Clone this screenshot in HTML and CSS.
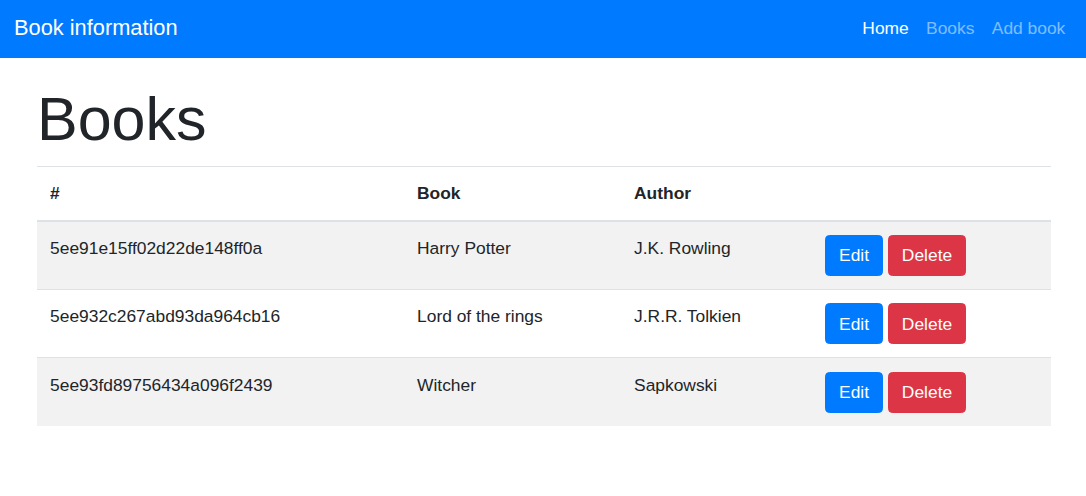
FILE: index.html
```html
<!DOCTYPE html>
<html lang="en">
<head>
<meta charset="utf-8">
<title>Book information</title>
<link rel="stylesheet" href="styles.css">
</head>
<body>
<nav class="navbar">
  <a class="brand" href="#">Book information</a>
  <ul class="nav">
    <li><a class="nav-link active" href="#">Home</a></li>
    <li><a class="nav-link" href="#">Books</a></li>
    <li><a class="nav-link" href="#">Add book</a></li>
  </ul>
</nav>
<main class="container">
  <h1 class="title">Books</h1>
  <table class="table">
    <colgroup>
      <col class="c-id"><col class="c-book"><col class="c-author"><col class="c-actions">
    </colgroup>
    <thead>
      <tr><th>#</th><th>Book</th><th>Author</th><th></th></tr>
    </thead>
    <tbody>
      <tr class="odd">
        <td>5ee91e15ff02d22de148ff0a</td><td>Harry Potter</td><td>J.K. Rowling</td>
        <td><button class="btn btn-primary">Edit</button> <button class="btn btn-danger">Delete</button></td>
      </tr>
      <tr>
        <td>5ee932c267abd93da964cb16</td><td>Lord of the rings</td><td>J.R.R. Tolkien</td>
        <td><button class="btn btn-primary">Edit</button> <button class="btn btn-danger">Delete</button></td>
      </tr>
      <tr class="odd">
        <td>5ee93fd89756434a096f2439</td><td>Witcher</td><td>Sapkowski</td>
        <td><button class="btn btn-primary">Edit</button> <button class="btn btn-danger">Delete</button></td>
      </tr>
    </tbody>
  </table>
</main>
</body>
</html>
```

FILE: styles.css
```css
* { box-sizing: border-box; }

body {
  margin: 0;
  font-family: "Liberation Sans", Arial, sans-serif;
  font-size: 17.4px;
  line-height: 1.5;
  color: #212529;
  background: #fff;
}

.navbar {
  height: 58px;
  background: #007bff;
  display: flex;
  align-items: center;
  justify-content: space-between;
  padding: 0 12px 2px 14px;
}

.brand {
  color: #fff;
  text-decoration: none;
  font-size: 21.8px;
  line-height: 32px;
}

.nav {
  list-style: none;
  margin: 0;
  padding: 0;
  display: flex;
}

.nav-link {
  display: block;
  padding: 0 8.7px;
  color: rgba(255, 255, 255, 0.5);
  text-decoration: none;
  line-height: 26px;
}

.nav-link.active { color: #fff; }

.container {
  margin: 0 35px 0 37px;
  padding-top: 25px;
}

.title {
  margin: 0 0 10px;
  font-size: 61px;
  font-weight: 300;
  line-height: 73px;
}

.table {
  width: 100%;
  border-collapse: collapse;
  table-layout: fixed;
}

.c-id { width: 367px; }
.c-book { width: 217px; }
.c-author { width: 191px; }

.table th,
.table td {
  padding: 13.05px;
  text-align: left;
  vertical-align: top;
  border-top: 1px solid #dee2e6;
  line-height: 26.1px;
}

.table th { font-weight: 700; }

.table thead th {
  padding-bottom: 13.6px;
  border-bottom: 2px solid #dee2e6;
}

.table tbody tr.odd { background: rgba(0, 0, 0, 0.05); }

.btn {
  display: inline-block;
  font-family: inherit;
  font-size: 17.4px;
  line-height: 26.1px;
  padding: 6.6px 13px;
  border: 1px solid transparent;
  border-radius: 4.4px;
  color: #fff;
  cursor: pointer;
  vertical-align: top;
}

.btn-primary { background: #007bff; border-color: #007bff; }
.btn-danger { background: #dc3545; border-color: #dc3545; }
```
